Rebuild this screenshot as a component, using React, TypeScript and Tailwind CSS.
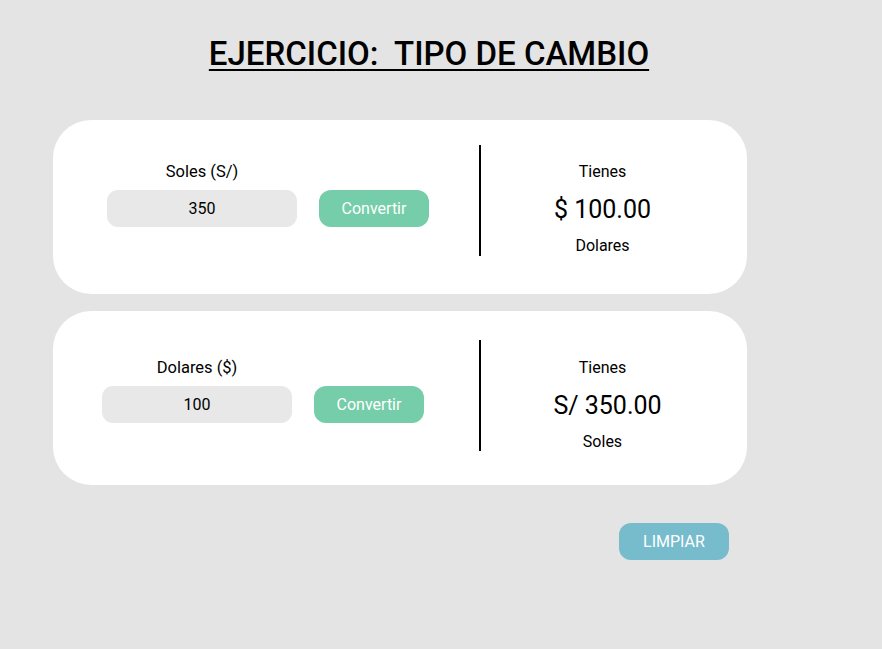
import { useState } from "react";

type CardProps = {
  label: string;
  amount: string;
  result: string;
  unit: string;
  padLeft: string;
  padTop: string;
  lineTop: string;
  resultShift?: string;
};

function ConverterCard({ label, amount, result, unit, padLeft, padTop, lineTop, resultShift = "" }: CardProps) {
  const [value, setValue] = useState(amount);

  return (
    <section className="flex h-[174px] w-[694px] items-start rounded-[38px] bg-white">
      <div className={`w-[426px] ${padLeft} ${padTop}`}>
        <p className="w-[190px] text-center text-[16.5px] leading-6">{label}</p>
        <div className="mt-[6px] flex items-center gap-[22px]">
          <input
            value={value}
            onChange={(e) => setValue(e.target.value)}
            className="h-[37px] w-[190px] rounded-[11px] bg-[#e8e8e8] text-center text-[16px] text-black outline-none"
          />
          <button className="h-[37px] w-[110px] rounded-[12px] bg-[#76cda9] text-[16px] text-white">
            Convertir
          </button>
        </div>
      </div>

      <div className={`h-[111px] w-[1.5px] bg-black ${lineTop}`} />

      <div className={`flex w-[244px] flex-col items-center ${padTop}`}>
        <p className="text-[16px] leading-6">Tienes</p>
        <p className={`mt-[10px] text-[25px] leading-8 ${resultShift}`}>{result}</p>
        <p className="mt-[8px] text-[16px] leading-6">{unit}</p>
      </div>
    </section>
  );
}

export default function App() {
  return (
    <main className="min-h-screen bg-[#e4e4e4] font-['Roboto',sans-serif] text-black">
      <div className="h-[120px] pr-[24px] pt-[37px] text-center">
        <h1 className="whitespace-pre text-[33px] font-medium leading-none underline decoration-2 underline-offset-[4px]">
          EJERCICIO:  TIPO DE CAMBIO
        </h1>
      </div>

      <div className="ml-[53px] flex flex-col gap-[17px]">
        <ConverterCard
          label="Soles (S/)"
          amount="350"
          result="$ 100.00"
          unit="Dolares"
          padLeft="pl-[54px]"
          padTop="pt-[40px]"
          lineTop="mt-[25px]"
        />
        <ConverterCard
          label="Dolares ($)"
          amount="100"
          result="S/ 350.00"
          unit="Soles"
          padLeft="pl-[49px]"
          padTop="pt-[45px]"
          lineTop="mt-[29px]"
          resultShift="ml-[10px]"
        />
      </div>

      <div className="ml-[619px] mt-[38px]">
        <button className="h-[37px] w-[110px] rounded-[12px] bg-[#76bccd] text-[16px] text-white">
          LIMPIAR
        </button>
      </div>
    </main>
  );
}
